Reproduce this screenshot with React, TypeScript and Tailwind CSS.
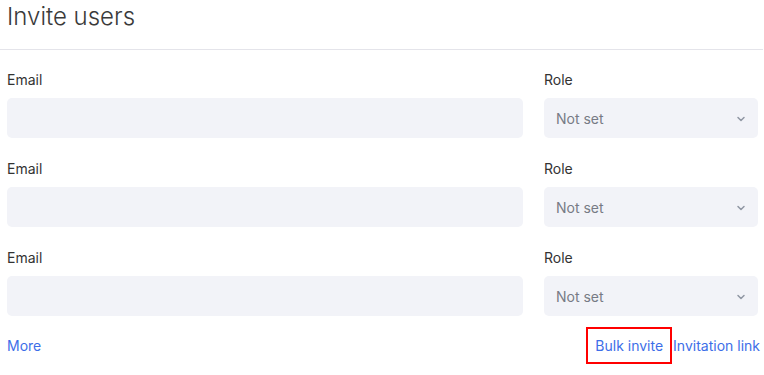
import { ChevronDown } from 'lucide-react';

const rows = [0, 1, 2];

export default function App() {
  return (
    <div className="w-[764px] h-[375px] bg-white font-['Inter','Liberation_Sans',sans-serif] text-[#333]">
      {/* Header */}
      <div className="h-[50px] border-b border-[#e4e4ea] pl-[7px] mr-[1px]">
        <h1 className="text-[24px] leading-[34px] font-light text-[#3a3a3a]">Invite users</h1>
      </div>

      {/* Form rows */}
      <div className="pl-[7px] pr-[6px] pt-[20px] flex flex-col gap-y-[21px]">
        {rows.map((i) => (
          <div key={i} className="grid grid-cols-[516px_214px] gap-x-[21px]">
            <div className="flex flex-col">
              <label className="text-[14px] leading-[20px] text-[#333] mb-[8px]">Email</label>
              <input className="h-[40px] rounded-[5px] bg-[#f2f3f8] outline-none px-3 text-[14px]" />
            </div>
            <div className="flex flex-col">
              <label className="text-[14px] leading-[20px] text-[#333] mb-[8px]">Role</label>
              <div className="h-[40px] rounded-[5px] bg-[#f2f3f8] flex items-center justify-between pl-[12px] pr-[11px]">
                <span className="text-[14px] text-[#777b85]">Not set</span>
                <ChevronDown size={12} strokeWidth={3} className="text-[#9097a3] mt-[1px]" />
              </div>
            </div>
          </div>
        ))}
      </div>

      {/* Footer links */}
      <div className="flex items-center justify-between mt-[11px] pl-[7px] pr-[4px]">
        <a className="text-[14px] text-[#3d6ee8]">More</a>
        <div className="flex items-center">
          <a className="text-[14px] text-[#3d6ee8] border-2 border-[#ff0000] px-[7px] h-[37px] flex items-center">Bulk invite</a>
          <a className="text-[14px] text-[#3d6ee8] pl-[1px]">Invitation link</a>
        </div>
      </div>
    </div>
  );
}
